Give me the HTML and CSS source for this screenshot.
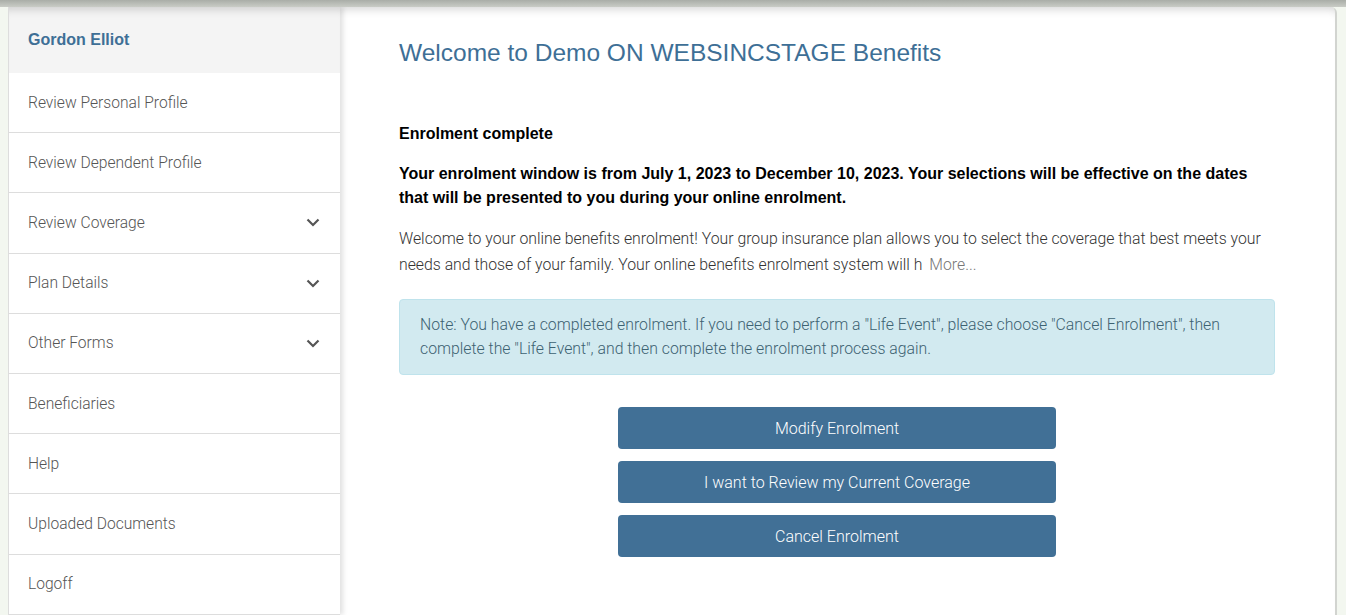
FILE: index.html
```html
<!DOCTYPE html>
<html lang="en">
<head>
<meta charset="utf-8">
<title>Benefits</title>
<link rel="stylesheet" href="styles.css">
</head>
<body>
<div class="topbar"></div>
<div class="card">
  <nav class="sidebar">
    <div class="user">Gordon Elliot</div>
    <a class="item" href="#">Review Personal Profile</a>
    <a class="item" href="#">Review Dependent Profile</a>
    <a class="item" href="#">Review Coverage <svg class="chev" viewBox="0 0 14 9" width="14" height="9"><path d="M1.5 1.5 L7 7 L12.5 1.5" fill="none" stroke="#555" stroke-width="2.2"/></svg></a>
    <a class="item" href="#">Plan Details <svg class="chev" viewBox="0 0 14 9" width="14" height="9"><path d="M1.5 1.5 L7 7 L12.5 1.5" fill="none" stroke="#555" stroke-width="2.2"/></svg></a>
    <a class="item" href="#">Other Forms <svg class="chev" viewBox="0 0 14 9" width="14" height="9"><path d="M1.5 1.5 L7 7 L12.5 1.5" fill="none" stroke="#555" stroke-width="2.2"/></svg></a>
    <a class="item" href="#">Beneficiaries</a>
    <a class="item" href="#">Help</a>
    <a class="item" href="#">Uploaded Documents</a>
    <a class="item" href="#">Logoff</a>
  </nav>
  <main class="content">
    <h1 class="title">Welcome to Demo ON WEBSINCSTAGE Benefits</h1>
    <p class="strong first">Enrolment complete</p>
    <p class="strong">Your enrolment window is from July 1, 2023 to December 10, 2023. Your selections will be effective on the dates that will be presented to you during your online enrolment.</p>
    <p class="body">Welcome to your online benefits enrolment! Your group insurance plan allows you to select the coverage that best meets your needs and those of your family. Your online benefits enrolment system will h <a class="more" href="#">More...</a></p>
    <div class="alert">Note: You have a completed enrolment. If you need to perform a "Life Event", please choose "Cancel Enrolment", then complete the "Life Event", and then complete the enrolment process again.</div>
    <div class="actions">
      <button class="btn">Modify Enrolment</button>
      <button class="btn">I want to Review my Current Coverage</button>
      <button class="btn">Cancel Enrolment</button>
    </div>
  </main>
</div>
</body>
</html>
```

FILE: styles.css
```css
html, body {
  margin: 0;
  padding: 0;
  height: 100%;
}
body {
  background: #f3f7f0;
  font-family: Roboto, "Liberation Sans", sans-serif;
  font-weight: 300;
  overflow: hidden;
}
.topbar {
  height: 7px;
  background: linear-gradient(#a9ada7, #c9ccc6);
}
.card {
  display: flex;
  margin: 0 9px 0 8px;
  height: 608px;
  background: #fff;
  border-right: 2px solid #d2d4d0;
  border-top-right-radius: 6px;
  box-shadow: inset 0 10px 10px -8px rgba(0,0,0,0.18);
  overflow: hidden;
}
.sidebar {
  width: 332px;
  flex: none;
  display: flex;
  flex-direction: column;
  border-left: 1px solid #ddd;
  box-sizing: border-box;
  box-shadow: 3px 0 5px rgba(0,0,0,0.12);
  position: relative;
  z-index: 1;
  background: #fff;
}
.user {
  height: 66px;
  flex: none;
  box-sizing: border-box;
  padding: 24px 0 0 19px;
  background: #f4f4f4;
  font-family: "Liberation Sans", Arial, sans-serif;
  font-weight: bold;
  font-size: 16px;
  color: #3e6f96;
  box-shadow: inset 0 10px 10px -8px rgba(0,0,0,0.18);
}
.item {
  height: 60.2px;
  flex: none;
  box-sizing: border-box;
  border-bottom: 1px solid #ddd;
  display: flex;
  align-items: center;
  justify-content: space-between;
  padding: 0 20px 0 19px;
  color: #555;
  font-size: 15.6px;
  text-decoration: none;
}
.chev {
  display: block;
}
.content {
  flex: 1;
  padding: 31px 60px 0 59px;
  color: #333;
}
.title {
  margin: 0;
  font-family: "Liberation Sans", Arial, sans-serif;
  font-weight: normal;
  font-size: 24.5px;
  line-height: 30px;
  color: #3e6f96;
}
.strong {
  font-family: "Liberation Sans", Arial, sans-serif;
  font-weight: bold;
  font-size: 16px;
  line-height: 24px;
  color: #000;
  margin: 0 0 16px;
}
.strong.first {
  margin-top: 54px;
}
.body {
  margin: 0 0 22px;
  font-size: 15.8px;
  line-height: 25.5px;
  color: #333;
}
.more {
  color: #777;
  text-decoration: none;
  margin-left: 3px;
}
.alert {
  background: #d2eaf0;
  border: 1px solid #bfe3ec;
  border-radius: 4px;
  padding: 13px 20px;
  font-size: 15.8px;
  line-height: 24px;
  color: #3d6272;
}
.actions {
  display: flex;
  flex-direction: column;
  align-items: center;
  gap: 12px;
  margin-top: 32px;
}
.btn {
  width: 438px;
  height: 42px;
  border: none;
  border-radius: 4px;
  background: #417096;
  color: #fff;
  font-family: Roboto, "Liberation Sans", sans-serif;
  font-weight: 300;
  font-size: 16px;
}
```
